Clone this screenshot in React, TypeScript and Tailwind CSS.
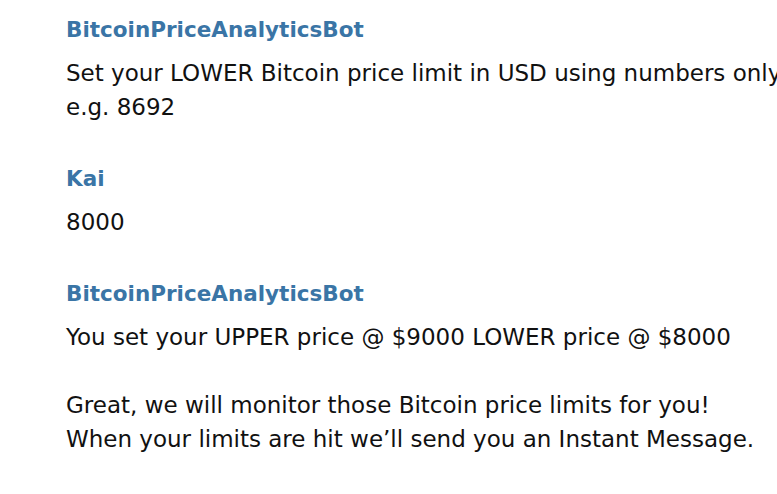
import React from 'react';

type Msg = { from: string; lines: string[] };

const messages: Msg[] = [
  {
    from: 'BitcoinPriceAnalyticsBot',
    lines: ['Set your LOWER Bitcoin price limit in USD using numbers only', 'e.g. 8692'],
  },
  { from: 'Kai', lines: ['8000'] },
  {
    from: 'BitcoinPriceAnalyticsBot',
    lines: [
      'You set your UPPER price @ $9000 LOWER price @ $8000',
      '',
      'Great, we will monitor those Bitcoin price limits for you!',
      'When your limits are hit we\u2019ll send you an Instant Message.',
    ],
  },
];

export default function App() {
  return (
    <div className="w-[777px] h-[494px] overflow-hidden bg-white pl-[66px] pt-[13px] font-['DejaVu_Sans',sans-serif]">
      <div className="flex flex-col gap-[38px]">
        {messages.map((m, i) => (
          <div key={i}>
            {/* sender */}
            <div className="text-[21.5px] leading-[34px] font-bold text-[#3a75a6] mb-[9px]">{m.from}</div>
            {/* body */}
            <div className="text-[23px] leading-[34px] text-[#111] whitespace-nowrap">
              {m.lines.map((l, j) => (
                <div key={j} className="h-[34px]">{l}</div>
              ))}
            </div>
          </div>
        ))}
      </div>
    </div>
  );
}
